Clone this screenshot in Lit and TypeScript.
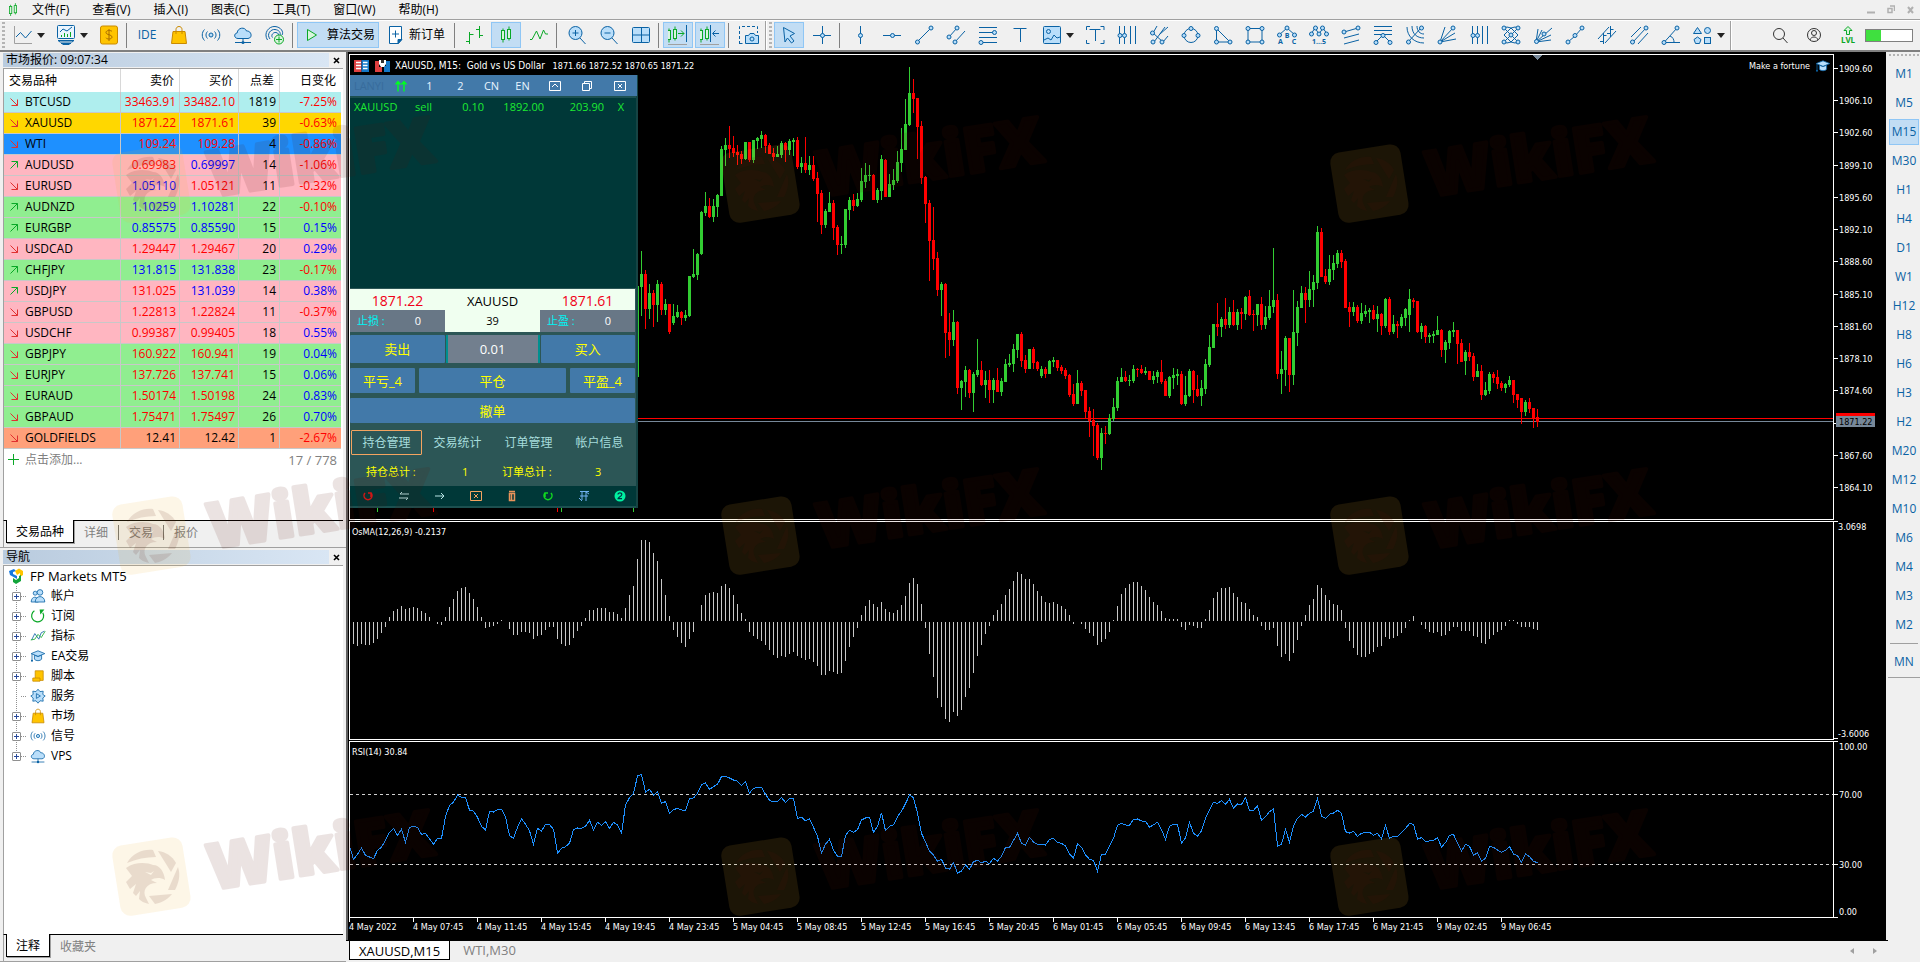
import { LitElement, html, svg, css, nothing } from "lit";
import { customElement } from "lit/decorators.js";
import { classMap } from "lit/directives/class-map.js";

/* ---------- shared look ---------- */

const base = css`
  * { box-sizing: border-box; }
  :host {
    font-family: "Open Sans", "Noto Sans", "Noto Sans CJK SC", sans-serif;
    font-size: 12px;
    line-height: 16px;
    color: #000;
  }
  button {
    appearance: none;
    margin: 0;
    padding: 0;
    border: 0;
    background: none;
    font: inherit;
    color: inherit;
    cursor: default;
    white-space: nowrap;
  }
  svg { display: block; flex: none; }
  .sheet-tabs {
    display: flex;
    align-items: flex-start;
    height: 27px;
    padding-left: 2px;
    background: #f0f0f0;
    border-top: 1px solid #000;
    color: #808080;
  }
  .sheet-tabs button { height: 22px; padding: 0 10px; line-height: 21px; }
  .sheet-tabs .on {
    margin-top: -1px;
    height: 23px;
    color: #000;
    background: #fff;
    border: 1px solid #000;
    border-top: 0;
    box-shadow: 1px 1px 0 #a0a0a0;
    padding: 0 9px;
  }
  .sheet-tabs i { width: 1px; height: 15px; margin-top: 4px; background: #707070; }
  .caption {
    display: flex;
    align-items: center;
    height: 14px;
  }
  .caption h2 {
    flex: 1;
    margin: 0;
    padding-left: 3px;
    font-size: 12px;
    font-weight: 400;
    line-height: 14px;
    background: linear-gradient(90deg, #b9cbde, #d9e6f4);
  }
  .caption button { width: 14px; display: grid; place-items: center; }
`;

/* ---------- icons ---------- */

const BLUE = "#0a62a4";
const PALE = "#b9defa";
const GREEN = "#0aa827";

const dot = (x: number, y: number, r = 2) =>
  svg`<circle cx=${x} cy=${y} r=${r} fill=${PALE} stroke=${BLUE}></circle>`;
const line = (d: string, c = BLUE) => svg`<path d=${d} fill="none" stroke=${c}></path>`;
const area = (d: string, c = BLUE, f = PALE) => svg`<path d=${d} fill=${f} stroke=${c}></path>`;
const glyphs = (x: number, y: number, s: string) =>
  svg`<text x=${x} y=${y} text-anchor="middle" font-size="7" font-weight="700" fill=${BLUE}>${s}</text>`;

const candles = (x: number) => svg`
  <path d="M${x} 3.5v14M${x + 6} 1.5v14" stroke=${GREEN}></path>
  <rect x=${x - 1.5} y="5.5" width="3" height="9" fill="#d9f5dd" stroke=${GREEN}></rect>
  <rect x=${x + 4.5} y="4.5" width="3" height="9" fill="#d9f5dd" stroke=${GREEN}></rect>`;

const cloud = svg`
  ${area("M5 13.5c-4 0-4.500-5-.8-5.600C4.500 2.500 12 1.500 13.500 6c5-.5 6.500 7 1.500 7.500z")}
  ${line("M10 13.500v3M2 17.500h16")}<circle cx="10" cy="17.500" r="1.500" fill=${BLUE}></circle>`;
const bag = svg`
  <path d="M4 6.500h12l1.500 12h-15z" fill="#ffc400" stroke="#c98a00"></path>
  <path d="M7 9V4.500c0-4 6-4 6 0V9" fill="none" stroke="#c98a00"></path>`;
const signal = svg`
  ${line("M3.500 4.500c-3 3-3 8 0 11M6.500 6.500c-2 2-2 5 0 7M16.500 4.500c3 3 3 8 0 11M13.500 6.500c2 2 2 5 0 7")}
  ${dot(10, 10)}`;
const hat = svg`
  ${area("M1.500 7L10 3.500 18.500 7 10 10.500z")}
  ${area("M5.500 9v5c2 2.500 7 2.500 9 0V9l-4.500 1.800z")}${line("M2.500 7.500v8")}
  <circle cx="2.500" cy="16" r="1.300" fill=${BLUE}></circle>`;

const icons: Record<string, unknown> = {
  logo: svg`${candles(7)}`,
  lineChart: svg`${line("M1.500 1v17.500H19", "#a0a0a0")}${line("M3 12l4.500-4.500 5 5.500L18.500 6")}`,
  indicators: svg`<rect x="1.500" y=".5" width="17" height="13" rx="1" fill="#eaf5fe" stroke=${BLUE}></rect>
    ${line("M2 15.500h16l-2 1.500H4zM5 18.500h10M6.500 19.500h7")}${line("M4 7l3-3 4 2 5-4")}
    ${line("M5.500 12v-2M8.500 12V8M11.500 12V9M14.500 12V7", GREEN)}`,
  dollar: svg`<rect x="1.500" y="1" width="17" height="18" rx="2" fill="#ffc400" stroke="#c98a00"></rect>
    <path d="M13 6.500c-1-1.500-6-1.500-6 1s6 2 6 4.500-5 2.500-6 .8M10 4v12" fill="none" stroke="#a86a00"></path>`,
  bag, signal, cloud, hat,
  antenna: svg`${line("M2.500 15C-2 8 4 1 10 1.500S19 7 17 10M5 14C1 9 6 4 10 4.500s6 3 5 6M7.500 12.500c-2-2.500 1-5.500 3.500-5s3 2 2 3.500")}
    <circle cx="14" cy="14.500" r="4.500" fill="#d9f5dd" stroke=${GREEN}></circle>${line("M14 11.500v6M11 14.500h6", GREEN)}`,
  play: svg`${area("M4.500 4.500L13.500 10l-9 5.500z", GREEN, "#d9f5dd")}`,
  order: svg`${area("M2.500 1.500h12v13l-3 4h-9z", BLUE, "#fff")}${line("M8.500 5.500v7M5 9h7")}
    ${area("M11 18.500v-4h4z", BLUE, BLUE)}`,
  bars: svg`${line("M4.500 7v12M1 16.500h3.500M4.500 9.500h4M14.500 1v12M11 4.500h3.500M14.500 10.500H18", GREEN)}`,
  candles: candles(7),
  zigzag: svg`${line("M1 14.500h2L7.500 6l3.500 8 3.500-9 2 4H19", GREEN)}`,
  zoomIn: svg`<circle cx="8.500" cy="8" r="6.500" fill=${PALE} stroke=${BLUE}></circle>${line("M13 13l5.500 6M8.500 5v6M5.500 8h6")}`,
  zoomOut: svg`<circle cx="8.500" cy="8" r="6.500" fill=${PALE} stroke=${BLUE}></circle>${line("M13 13l5.500 6M5.500 8h6")}`,
  tiles: svg`<rect x="1.500" y="2.500" width="17" height="15" rx="1" fill=${PALE} stroke=${BLUE}></rect>${line("M10.500 2.500v15M1.500 10h17")}`,
  shift: svg`<g transform="translate(-4 0)">${candles(5)}</g>${line("M10 8.500h6M13 5.500l3 3-3 3", GREEN)}${line("M18.500 0v17")}${line("M0 19.500h19", "#a0a0a0")}`,
  scroll: svg`<g transform="translate(-4 0)">${candles(5)}</g>${line("M10.500 0v17M19 8.500h-6M15.500 5.500l-3 3 3 3")}${line("M0 19.500h19", "#a0a0a0")}`,
  camera: svg`<path d="M.5 19V1.500h18V8M.5 18.500H5" fill="none" stroke=${BLUE} stroke-dasharray="3 2"></path>
    ${area("M6.500 10.500h3l1.500-2h4l1.500 2h3v8h-13z")}${dot(13, 14)}`,
  cursor: svg`${area("M4.500 2.500l11 6-4.500 2.500 4 5-2.500 2-4-5-2.500 4z")}`,
  cross: svg`${line("M10.500 1v18M1 10.500h18")}${dot(10.500, 10.500)}`,
  vline: svg`${line("M10.500 1v18")}${dot(10.500, 10.500)}`,
  hline: svg`${line("M1 10.500h18")}${dot(10.500, 10.500)}`,
  trend: svg`${line("M3 17L17 3")}${dot(3.500, 17)}${dot(17, 3)}`,
  channel: svg`${line("M3 12L11 3M9 17l10-11")}${dot(3, 12)}${dot(11, 3)}${dot(9, 17)}`,
  fibo: svg`${line("M1 2.500h18M1 7.500h15M1 12.500h18M4 17.500h15")}${dot(16.500, 7.500)}${dot(3, 17.500)}`,
  text: svg`${line("M3.500 3.500h13M10.500 3.500V17")}`,
  image: svg`<rect x="1.500" y="1.500" width="17" height="17" rx="1" fill=${PALE} stroke=${BLUE}></rect>${dot(6.500, 6.500)}${line("M2 15l4-2 3 2 3-5 3 3 3-1")}`,
  label: svg`${line("M1.500 5V1.500h3.500M15.500 1.500h3.500V5M19 15v3.500h-3.500M4.500 18.500H1.500V15M4.500 4.500h11M10.500 4.500V16")}`,
  gannLines: svg`${line("M2.500 1v18M7.500 1v18M13.500 1v18M18.500 1v18")}${dot(3, 10.500)}${dot(7.500, 10.500)}`,
  pitchfork: svg`${line("M4 8l4-7M5 17L16 2M11 9l8-7M4 8l10 9M14 17l5-6")}${dot(3.500, 8)}${dot(4, 17)}${dot(13, 17)}`,
  ellipse: svg`<circle cx="10" cy="10.500" r="7" fill="none" stroke=${BLUE}></circle>${dot(10, 3.500)}${dot(3, 10.500)}${dot(17, 10.500)}`,
  triangle: svg`${line("M3.500 3.500v13.500H17z")}${dot(3.500, 3.500)}${dot(3.500, 17)}${dot(17, 17)}`,
  rect: svg`${line("M3 3.500h14v13.500H3z")}${dot(3, 3.500)}${dot(17, 3.500)}${dot(3, 17)}${dot(17, 17)}`,
  abc: svg`${line("M2 10l8-7 8 7")}${dot(10, 3)}${dot(2.500, 10)}${dot(17.500, 10)}${glyphs(10, 13, "B")}${glyphs(3.500, 19, "A")}${glyphs(17, 19, "C")}`,
  wave5: svg`${line("M2 9l4-6 4 6 4-6 4 6")}${dot(2.500, 9)}${dot(6.500, 3)}${dot(10, 9)}${dot(13.500, 3)}${dot(17.500, 9)}${glyphs(10, 19, "1...5")}`,
  regress: svg`${line("M3 7l14-4M3 13l15-4M3 19l15-4")}${dot(3, 7)}${dot(17, 3)}`,
  arcs: svg`${line("M1 1.500h18M1 5.500h18M3 17l7-7 7 7M1 9.500h18")}${dot(3, 17.500)}${dot(10, 10.500)}${dot(17, 17.500)}`,
  fiboArc: svg`${line("M3 17L16 3M2 2c0 9 7 16 17 16M7 1c0 8 5 12 12 12M12 1c0 5 3 8 7 8")}${dot(3.500, 17)}${dot(16.500, 3)}`,
  fan: svg`${line("M3 17L8 2M3 17L16 3M3 17l15-9M3 17l16-3")}${dot(3, 17)}${dot(16, 3)}`,
  gannFan: svg`${line("M3.500 1v18M8.500 1v18M13.500 1v18M18.500 1v18")}${dot(4, 10.500)}${dot(8.500, 10.500)}`,
  grid: svg`${line("M3 3l14 14M17 3L3 17M10 3l7 7-7 7-7-7zM10 3l4-1 3 1M10 3L6 2 3 3M10 17l4 1 3-1M10 17l-4 1-3-1")}${dot(3, 3)}${dot(17, 3)}${dot(10, 10)}${dot(3, 17)}${dot(17, 17)}`,
  rays: svg`${line("M3 17L5 4M3 17L19 3M3 17l6-12M3 17l15-7M3 17l15-2")}${dot(3.500, 16.500)}${dot(11, 9)}`,
  cycle: svg`${line("M3 17l7-6 7-8")}${dot(3, 17)}${dot(10, 10.500)}${dot(17, 3)}`,
  stdDev: svg`${line("M1 14L12 2M8 18L19 6M6.500 8v11M3 16.500h3.500M6.500 10.500h3M13.500 1v11M10 8.500h3.500M13.500 4.500h3")}`,
  parallels: svg`${line("M2 12L12 2M4 17L17 3M9 19l10-11")}${dot(3.500, 17)}${dot(17, 3)}`,
  angle: svg`${line("M3 17.500L16 3M3 17.500h16M9 11c3 1 4 4 4 6")}${dot(3, 17.500)}${dot(16, 3)}`,
  shapes: svg`${area("M4.500 2.500l4 6h-8z")}<circle cx="14.500" cy="5.500" r="3" fill=${PALE} stroke=${BLUE}></circle>
    ${area("M4.500 12l3.500 2.500-1.500 4h-4l-1.500-4z")}<rect x="11.500" y="12.500" width="6" height="6" fill=${PALE} stroke=${BLUE}></rect>`,
  search: svg`<circle cx="9" cy="9" r="5.500" fill="none" stroke="#333"></circle>${line("M13 13l4.500 5", "#333")}`,
  user: svg`<g fill="none" stroke="#333"><circle cx="10" cy="10" r="6.500"></circle><circle cx="10" cy="8" r="2.500"></circle><path d="M6 15c1-4 7-4 8 0"></path></g>`,
  accounts: svg`${dot(6.500, 6.500, 2.500)}${area("M1.500 17.500c0-8 9-8 9 0z")}${dot(12.500, 5.500, 3.500)}${area("M6.500 17.500c0-9 12-9 12 0z")}`,
  refresh: svg`<path d="M5.500 3.500A7.500 7.500 0 1 0 16 6" fill="none" stroke=${GREEN} stroke-width="1.500"></path><path d="M12 2h6l-5 6z" fill=${GREEN}></path>`,
  osc: svg`${line("M2 15l4-8 5 7 3-8 4-2")}${line("M1 15l5-1 4-6 4 4 5-8", GREEN)}`,
  script: svg`<path d="M6.500 3.500h10v12h-10z" fill="#ffc400" stroke="#c98a00"></path><path d="M3.500 12.500h9v4h-9z" fill="#ffc400" stroke="#c98a00"></path>`,
  gear: svg`${area("M10 1.500l2.500 3 4-.5-.5 4 3 2-3 2.500.5 4-4-.5-2.500 3-2.500-3-4 .5.5-4L1 10l3-2-.5-4 4 .5z")}${area("M8 7l5 3-5 3z")}`,
};

const icon = (name: string, size = 20) =>
  html`<svg width=${size} height=${size} viewBox="0 0 20 20" aria-hidden="true">${icons[name]}</svg>`;
const caret = html`<svg width="8" height="5" viewBox="0 0 8 5" aria-hidden="true"><path d="M0 0h8L4 5z" fill="#222"></path></svg>`;
const cross = html`<svg width="7" height="7" viewBox="0 0 7 7" aria-hidden="true"><path d="M1 1l5 5M6 1L1 6" stroke="#000" stroke-width="1.600"></path></svg>`;

/* ---------- menu and toolbar ---------- */

type Tool = { id: string; name: string; on?: boolean; drop?: boolean };
const t = (id: string, name: string, extra: Partial<Tool> = {}): Tool => ({ id, name, ...extra });
const sep = "sep";

@customElement("tool-bar")
export class ToolBar extends LitElement {
  static styles = [base, css`
    :host { display: block; background: #f0f0f0; }
    .menu { display: flex; align-items: center; height: 19px; padding-left: 5px; }
    .menu nav { display: flex; flex: 1; gap: 23px; margin-left: 11px; }
    .menu button { line-height: 18px; }
    .win { display: flex; gap: 12px; padding-right: 6px; }
    .bar {
      display: flex;
      align-items: center;
      height: 33px;
      border-top: 1px solid #a0a0a0;
      border-bottom: 2px solid #808080;
      box-shadow: inset 0 1px 0 #fff;
      overflow: hidden;
    }
    .grip { flex: none; width: 3px; height: 26px; margin: 0 2px 0 2px; background: repeating-linear-gradient(#b4b4b4 0 2px, transparent 2px 4px); }
    .edge { flex: none; width: 2px; height: 29px; background: #a0a0a0; border-right: 1px solid #fff; }
    .sep { flex: none; width: 1px; height: 25px; margin: 0 4px 0 1px; background: #808080; }
    .tool {
      display: flex;
      flex: none;
      align-items: center;
      justify-content: center;
      width: 32px;
      height: 26px;
    }
    .drop { width: 43px; gap: 4px; }
    .on { width: 30px; margin-right: 2px; background: #c2ddf4; border: 1px solid #8fc6f5; }
    .ide { color: #0a62a4; }
    .algo { width: 82px; gap: 4px; margin: 0; padding-left: 2px; }
    .order { width: 74px; gap: 2px; }
    .end { display: flex; align-items: center; margin-left: auto; padding-right: 7px; }
    .end .tool { width: 34px; }
    .lvl { flex-direction: column; color: #0aa827; font-size: 8px; font-weight: 700; line-height: 8px; }
    .meter { width: 48px; height: 13px; border: 1px solid #808080; background: linear-gradient(90deg, #3fe03f 15px, #fff 15px); }
  `];

  private menus = ["文件(F)", "查看(V)", "插入(I)", "图表(C)", "工具(T)", "窗口(W)", "帮助(H)"];
  private left: (Tool | string)[] = [
    sep, t("bars", "柱状图"), t("candles", "蜡烛图", { on: true }), t("zigzag", "折线图"),
    sep, t("zoomIn", "放大"), t("zoomOut", "缩小"), t("tiles", "平铺"),
    sep, t("shift", "图表平移", { on: true }), t("scroll", "自动滚动", { on: true }),
    sep, t("camera", "截图"),
  ];
  private right: (Tool | string)[] = [
    t("cursor", "光标", { on: true }), t("cross", "十字线"), sep,
    t("vline", "垂直线"), t("hline", "水平线"), t("trend", "趋势线"), t("channel", "通道"), t("fibo", "斐波纳契"),
    t("text", "文本"), t("image", "图像", { drop: true }), t("label", "标签"), t("gannLines", "周期线"),
    t("pitchfork", "音叉"), t("ellipse", "椭圆"), t("triangle", "三角形"), t("rect", "矩形"), t("abc", "ABC"),
    t("wave5", "1...5"), t("regress", "回归"), t("arcs", "扩展"), t("fiboArc", "弧线"), t("fan", "扇形"),
    t("gannFan", "时区"), t("grid", "网格"), t("rays", "江恩扇"), t("cycle", "江恩线"), t("stdDev", "标准差"),
    t("parallels", "平行线"), t("angle", "角度"), t("shapes", "图形", { drop: true }),
  ];

  private tool = (x: Tool | string) =>
    typeof x === "string"
      ? html`<span class="sep"></span>`
      : html`<button class=${classMap({ tool: true, on: !!x.on, drop: !!x.drop })} aria-label=${x.name}>
          ${icon(x.id)}${x.drop ? caret : nothing}
        </button>`;

  render() {
    return html`
      <div class="menu">
        ${icon("logo", 16)}
        <nav>${this.menus.map((m) => html`<button>${m}</button>`)}</nav>
        <div class="win">
          <button aria-label="最小化"><svg width="8" height="9" viewBox="0 0 8 9"><path d="M0 7.500h8" stroke="#b0b0b0" stroke-width="2"></path></svg></button>
          <button aria-label="还原"><svg width="8" height="9" viewBox="0 0 8 9"><path d="M3 1h4.500v5M1 3.500h4v4H1z" fill="none" stroke="#b0b0b0" stroke-width="1.500"></path></svg></button>
          <button aria-label="关闭"><svg width="7" height="9" viewBox="0 0 7 9"><path d="M1 2l5 6M6 2L1 8" stroke="#b0b0b0" stroke-width="2"></path></svg></button>
        </div>
      </div>
      <div class="bar">
        <span class="grip"></span>
        ${this.tool(t("lineChart", "图表", { drop: true }))}
        ${this.tool(t("indicators", "指标", { drop: true }))}
        ${this.tool(t("dollar", "报价"))}
        <span class="sep"></span>
        <button class="tool ide">IDE</button>
        ${["bag", "signal", "cloud", "antenna"].map((n) => this.tool(t(n, n)))}
        <span class="sep"></span>
        <button class="tool on algo">${icon("play")}算法交易</button>
        <button class="tool order">${icon("order")}新订单</button>
        ${this.left.map(this.tool)}
        <span class="edge"></span>
        <span class="grip"></span>
        ${this.right.map(this.tool)}
        <span class="edge"></span>
        <div class="end">
          ${this.tool(t("search", "搜索"))}${this.tool(t("user", "帐户"))}
          <button class="tool lvl"><svg width="10" height="10" viewBox="0 0 10 10"><path d="M5 .5l4 4H6.500v4h-3v-4H1z" fill="#d9f5dd" stroke=${GREEN}></path></svg>LVL</button>
          <span class="meter"></span>
        </div>
      </div>`;
  }
}

/* ---------- market watch ---------- */

type Quote = [string, "u" | "d", string, string, string, string, string, string];
// symbol, direction, bid, ask, spread, change, row colour, price tints (bid, ask: r b k)
const quotes: Quote[] = [
  ["BTCUSD", "d", "33463.91", "33482.10", "1819", "-7.25%", "cyan", "rr"],
  ["XAUUSD", "d", "1871.22", "1871.61", "39", "-0.63%", "gold", "rr"],
  ["WTI", "d", "109.24", "109.28", "4", "-0.86%", "blue", "rr"],
  ["AUDUSD", "u", "0.69983", "0.69997", "14", "-1.06%", "pink", "rb"],
  ["EURUSD", "d", "1.05110", "1.05121", "11", "-0.32%", "pink", "br"],
  ["AUDNZD", "u", "1.10259", "1.10281", "22", "-0.10%", "green", "bb"],
  ["EURGBP", "u", "0.85575", "0.85590", "15", "0.15%", "green", "bb"],
  ["USDCAD", "d", "1.29447", "1.29467", "20", "0.29%", "pink", "rr"],
  ["CHFJPY", "u", "131.815", "131.838", "23", "-0.17%", "green", "bb"],
  ["USDJPY", "u", "131.025", "131.039", "14", "0.38%", "pink", "rb"],
  ["GBPUSD", "d", "1.22813", "1.22824", "11", "-0.37%", "pink", "rr"],
  ["USDCHF", "d", "0.99387", "0.99405", "18", "0.55%", "pink", "rr"],
  ["GBPJPY", "d", "160.922", "160.941", "19", "0.04%", "green", "rr"],
  ["EURJPY", "d", "137.726", "137.741", "15", "0.06%", "green", "rr"],
  ["EURAUD", "d", "1.50174", "1.50198", "24", "0.83%", "green", "rr"],
  ["GBPAUD", "d", "1.75471", "1.75497", "26", "0.70%", "green", "rr"],
  ["GOLDFIELDS", "d", "12.41", "12.42", "1", "-2.67%", "salmon", "kk"],
];

@customElement("market-watch")
export class MarketWatch extends LitElement {
  static styles = [base, css`
    :host { display: flex; flex-direction: column; padding: 1px 3px 0 3px; }
    .list { flex: 1; min-height: 0; overflow: hidden; margin-top: 1px; background: #fff; border: 1px solid #a0a0a0; border-width: 1px 0 0 1px; }
    .sheet-tabs { border-left: 1px solid #a0a0a0; }
    table { width: 337px; max-width: 100%; table-layout: fixed; border-collapse: separate; border-spacing: 0; }
    th { height: 23px; padding: 0 5px; font-weight: 400; text-align: right; border-right: 1px solid #d8d8d8; }
    th:first-child { text-align: left; }
    td { height: 21px; padding: 0 3px 0 0; line-height: 20px; text-align: right; border-right: 1px solid #c8c8c8; border-bottom: 1px solid #c8c8c8; }
    td:last-child { padding-right: 4px; border-right: 0; }
    th:last-child { border-right: 0; }
    td.sym { text-align: left; }
    .name { display: flex; align-items: center; gap: 7px; padding-left: 6px; }
    .r { color: #f00; } .b { color: #00f; } .k { color: #000; }
    .cyan { background: #afeeee; } .gold { background: #ffd700; } .blue { background: #1e90ff; }
    .pink { background: #ffb6c1; } .green { background: #90ee90; } .salmon { background: #ffa07a; }
    .add { display: flex; align-items: center; gap: 6px; height: 21px; padding: 0 4px; color: #808080; width: 337px; max-width: 100%; }
    .add output { margin-left: auto; font-size: 13px; }
  `];
  render() {
    const w = [117, 59, 59, 41, 61];
    return html`
      <header class="caption"><h2>市场报价: 09:07:34</h2><button aria-label="关闭">${cross}</button></header>
      <div class="list">
        <table>
          <colgroup>${w.map((x) => html`<col width=${x}>`)}</colgroup>
          <thead><tr><th>交易品种</th><th>卖价</th><th>买价</th><th>点差</th><th>日变化</th></tr></thead>
          <tbody>
            ${quotes.map(([s, dir, bid, ask, sp, ch, bg, tint]) => html`<tr class=${bg}>
              <td class="sym"><span class="name">
                <svg width="8" height="8" viewBox="0 0 8 8">${dir === "u"
                  ? line("M.5 7.500l7-7M1.500 .5h6v6", GREEN) : line("M.5 .5l7 7M1.500 7.500h6v-6", "#e03030")}</svg>${s}</span></td>
              <td class=${tint[0]}>${bid}</td><td class=${tint[1]}>${ask}</td><td>${sp}</td>
              <td class=${ch[0] === "-" ? "r" : "b"}>${ch}</td></tr>`)}
          </tbody>
        </table>
        <div class="add"><svg width="11" height="11" viewBox="0 0 11 11">${line("M5.500 0v11M0 5.500h11", GREEN)}</svg>
          <button>点击添加...</button><output>17 / 778</output></div>
      </div>
      <div class="sheet-tabs"><button class="on">交易品种</button><button>详细</button><i></i><button>交易</button><i></i><button>报价</button></div>`;
  }
}

/* ---------- navigator ---------- */

@customElement("nav-tree")
export class NavTree extends LitElement {
  static styles = [base, css`
    :host { display: flex; flex-direction: column; padding: 2px 3px 0 3px; border-top: 1px solid #a0a0a0; border-bottom: 1px solid #a0a0a0; }
    .tree { flex: 1; min-height: 0; margin-top: 1px; background: #fff; border: 1px solid #a0a0a0; border-width: 1px 0 0 1px; }
    .sheet-tabs { border-left: 1px solid #a0a0a0; }
    .root { display: flex; align-items: center; gap: 6px; height: 20px; padding-left: 4px; font-size: 13px; }
    ul { margin: 0; padding: 0; list-style: none; }
    li { display: flex; align-items: center; height: 20px; padding-left: 8px;
      background: repeating-linear-gradient(#909090 0 1px, transparent 1px 2px) 12px 0 / 1px 20px no-repeat; }
    li:last-child { background-size: 1px 10px; }
    .box { width: 9px; height: 9px; background: #fff; border: 1px solid #909090; border-radius: 1px; display: grid; place-items: center; }
    .none { border: 0; width: 5px; margin-right: 4px; background: none; }
    .stub { width: 6px; height: 1px; margin-right: 1px; background: repeating-linear-gradient(90deg, #909090 0 1px, transparent 1px 2px); }
    .label { padding-left: 3px; }
    .ico { width: 20px; display: grid; place-items: center; }
  `];
  private items: [string, string][] = [
    ["accounts", "帐户"], ["refresh", "订阅"], ["osc", "指标"], ["hat", "EA交易"], ["script", "脚本"],
    ["gear", "服务"], ["bag", "市场"], ["signal", "信号"], ["cloud", "VPS"],
  ];
  render() {
    return html`
      <header class="caption"><h2>导航</h2><button aria-label="关闭">${cross}</button></header>
      <div class="tree">
        <div class="root"><svg width="16" height="16" viewBox="0 0 16 16">
            <path d="M1 3l5-2 2 2-3 1v2l4 2v3L2 7z" fill="#1478e0"></path>
            <path d="M7 3l4-2.500L15 3v4l-3 2V5l-3 2z" fill="#ffc400"></path>
            <path d="M5 10l3 2 3-2V8l2-1v6l-5 3-3-2z" fill="#12a43a"></path></svg>FP Markets MT5</div>
        <ul>${this.items.map(([id, label]) => html`<li>
          ${id === "gear" ? html`<span class="box none"></span>` : html`<span class="box"><svg width="7" height="7" viewBox="0 0 7 7">${line("M3.500 1v5M1 3.500h5", "#2a4a9a")}</svg></span>`}
          <span class="stub"></span><span class="ico">${icon(id, 16)}</span><span class="label">${label}</span></li>`)}</ul>
      </div>
      <div class="sheet-tabs"><button class="on">注释</button><button>收藏夹</button></div>`;
  }
}

/* ---------- chart data ---------- */

// Each candle: colour, high, body top, body bottom, low, in thirds of a pixel.
const CANDLES = `g708,708,980,980 g603,672,711,798 r660,672,777,837 g702,729,777,807 r720,729,765,831 g690,702,765,816 r696,702,780,795 g747,762,780,795 r762,762,846,852 g762,798,819,825
g765,786,801,804 r783,786,804,825 g780,795,804,813 g678,678,798,801 g597,672,681,684 g609,612,675,690 g483,486,612,615 g426,468,489,498 r444,468,501,504 g447,468,501,516
g432,435,471,501 g288,297,438,438 g264,285,300,348 r228,285,297,324 r258,294,309,321 r285,306,315,345 r303,312,327,342 g276,276,327,330 r276,276,330,336 g270,270,330,339
g261,264,273,297 g243,255,267,294 r252,255,288,309 r279,285,312,312 r294,309,321,333 g288,312,321,321 g273,279,315,324 r276,279,300,336 g267,273,300,315 g264,270,276,318
r261,270,351,357 g321,339,351,369 r261,339,360,369 g318,345,360,375 r318,345,387,393 r366,384,432,516 r420,429,525,552 g477,483,525,534 g426,459,486,486 r450,459,534,570
r525,531,585,615 g558,582,585,612 g477,477,585,594 g441,450,480,510 r432,450,468,483 g429,447,468,471 g354,393,450,456 g339,375,396,414 g345,375,378,393 r372,375,450,450
g414,420,450,459 g315,327,423,450 r327,330,441,441 g372,402,441,441 g357,390,405,420 g303,336,393,399 g234,297,339,366 g147,222,300,300 g51,129,225,228 r87,129,147,189
r144,144,231,327 r213,228,384,402 r378,381,462,519 r450,459,573,693 r471,570,627,660 r606,624,720,738 g696,702,720,798 r699,702,849,924 r789,846,870,918 g780,816,870,888
r813,816,1014,1032 g990,993,1014,1080 g948,960,996,1041 r957,960,1029,1044 g966,972,1029,1086 g867,960,975,981 r933,960,1005,1008 g963,990,1005,1044 r960,990,1020,1059 g984,990,1020,1059
r954,990,1026,1026 g984,993,1026,1038 g927,942,996,996 g912,939,945,951 g882,897,942,966 g852,852,900,924 r846,852,933,951 r915,930,957,969 g897,897,957,957 r891,897,939,957
r933,936,957,963 g948,957,978,984 r951,957,972,984 g930,933,972,972 g921,930,936,951 r930,930,954,963 r945,951,963,972 r954,960,978,987 r972,975,1035,1041 r1002,1032,1062,1068
g960,999,1062,1062 r993,999,1023,1038 r1020,1020,1086,1104 r1071,1083,1113,1161 r1077,1110,1128,1218 r1119,1125,1224,1230 g1134,1149,1224,1260 r1128,1149,1152,1182 g1092,1104,1152,1155 g1044,1071,1107,1113
g981,993,1074,1083 g954,981,996,996 r963,981,993,996 g975,990,993,1008 g945,957,993,999 r954,957,960,981 r945,957,969,972 g951,963,969,975 r963,963,990,990 g963,978,990,1002
g960,966,981,999 r930,966,996,1002 r987,993,1038,1038 g978,981,1038,1044 g954,975,984,1017 g957,972,978,1005 r963,972,1062,1065 g978,1035,1062,1068 g957,963,1038,1041 r960,963,1020,1059
r975,1017,1038,1041 g990,1014,1038,1068 g927,942,1017,1032 g855,891,945,951 g822,822,894,894 r759,822,831,858 g801,807,831,861 r744,807,825,837 g771,786,825,834 r750,786,825,828
g777,786,825,840 r774,786,792,837 g738,741,792,810 r720,738,795,798 r780,792,795,843 g762,762,795,828 r741,762,825,840 g768,801,825,837 g720,768,804,810 g594,750,771,789
r732,750,972,987 g903,957,972,1032 g858,864,960,1008 r864,864,975,1026 g720,846,975,1005 g753,771,849,888 g708,729,774,774 r711,729,750,819 g663,717,750,771 g675,696,720,771
g528,546,699,717 r534,546,681,681 r657,678,696,702 g615,657,696,705 g615,639,660,690 g600,609,642,654 r600,609,636,654 r627,633,774,774 r756,771,786,831 g756,771,786,798
r765,771,813,819 g759,789,813,822 g765,783,792,801 g774,780,786,819 r765,780,807,810 g768,792,807,846 r789,792,828,855 g744,747,828,834 r741,747,846,855 g795,822,846,852
r813,822,828,864 g792,801,828,834 g774,777,804,828 g717,747,795,846 r744,750,756,774 r753,753,846,849 g819,828,846,867 r825,828,861,879 g849,855,861,879 g843,852,858,879
g798,840,855,855 r837,840,900,921 g870,876,900,939 g840,843,879,897 g816,840,846,861 r840,840,882,942 r867,879,936,936 g900,906,933,975 r879,906,921,933 r909,918,981,993
g942,963,981,981 r945,963,1035,1050 g996,1020,1035,1038 g966,972,1023,1032 r966,972,984,999 r960,981,1002,1017 r993,999,1014,1023 g999,1002,1014,1029 g978,990,1005,1011 r990,990,1035,1059
r1032,1032,1050,1074 r1044,1044,1086,1122 g1050,1056,1086,1098 r1044,1056,1077,1089 r1074,1074,1104,1134 r1077,1101,1116,1131`
  .split(/\s+/)
  .map((c) => ({ up: c[0] === "g", v: c.slice(1).split(",").map(Number) }));

// Histogram ends, one bar every four pixels, in thirds of a pixel; 320 is zero.
const OSMA = `384 390 384 387 387 381 369 351 333 306 288 282 273 282 279 276 279 288 294 306 320 324 327 306 276 252 228 219 216 234 252 276 306 336 333 330 324 315 320
339 357 357 348 348 351 369 360 357 342 333 333 369 384 390 387 366 345 330 309 285 285 279 279 279 291 291 297 309 279 240 213 132 75 75 81 114 138 192 240 303
342 363 381 393 369 348 320 270 240 234 231 234 213 207 219 240 267 294 312 348 360 369 375 387 402 417 426 420 423 414 408 420 426 432 429 438 450 477 477 465 468 474 471 435 393 363 336
300 273 255 267 276 261 282 291 294 285 270 243 204 189 207 267 336 414 483 546 573 609 618 588 600 582
543 516 471 420 387 354 330 300 285 267 240 222 198 171 177 192 192 207 228 243 261 264 261 267 273 282 300 324 320 324 339 351 360 387 378 369 348 315 273 237 219 207 201 201 213 225 246 261 270 288
309 312 312 312 333 342 327 330 336 336 312 285 249 231 219 219 216 234 246 261 264 282 300 306 330 342 342 336 390 423 414 435 411 372 330 300 270 252 210 219 240 255 267 270 285 336 375 396 417 423 423
414 408 393 390 363 369 366 360 351 336 315 303 320 327 339 348 351 348 360 357 345 333 333 345 345 345 360 363 381 384 369 357 348 342 330 315 315 324 333 333 333 339 342`
  .split(/\s+/)
  .map(Number);

// Oscillator samples, one every four pixels, in thirds of a pixel.
const RSI = `993 1033 1018 999 1021 1026 1031 1006 997 975 952 940 961 943 982 937 934 937 958 955 972 988 970 970 905 871 862 840 847 848 885 889 907 934 945 889 891 884 883 905 962 970 937 911 928 947 988 940 948 928 929 943 1015 1000 995 985 944 939 940 934 916 945 922 931 920 940 922 930 955 870 848 835 783 778 831 823 840 830 864 860 894 884 880 885 886 851 849 835 809 804 823 815 808 785 784 789 795 799 811 800 834 820 817 817 838 856 861 860 848 862 850 850 910 907 917 912 937 964 1014 988 973 1005 1024 1024 962 946 952 944 915 909 907 952 934 893 947 934 929 905 889 866 840 848 895 955 981 1008 1020 1039 1033 1059 1063 1043 1074 1068
1050 1063 1040 1036 1043 1039 1046 1030 1038 1024 997 997 976 955 985 991 967 981 988 988 990 973 970 982 985 993 1017 1029 986 997 1020 1033 1036 1069 1018 1018 993 970 931 925 930 931 913 912 918 919 937 929 922 944 973 934 928 928 985 968 922 955 964 947 910 885 862 865 857 868 853 880 867 868 848 886 886 872 916 905 890 881 993 988 943 982 934 910 898 906 895 888 850 903 910 898 894 886 895 950 954 949 964 955 952 952 961 955 972 931 970 964 964 952 940 926 928 972 968 979 978 976 968 996 983 961 958 985 1008 988 994 1020 1014 1039 1030 995 997 1005 1012 1006 995 1017 1022 1042 1016 1025 1039 1043`
  .split(/\s+/)
  .map(Number);

const TIMES = ["4 May 2022", "4 May 07:45", "4 May 11:45", "4 May 15:45", "4 May 19:45", "4 May 23:45", "5 May 04:45", "5 May 08:45", "5 May 12:45", "5 May 16:45", "5 May 20:45", "6 May 01:45", "6 May 05:45", "6 May 09:45", "6 May 13:45", "6 May 17:45", "6 May 21:45", "9 May 02:45", "9 May 06:45"];
const PRICES = ["1909.60", "1906.10", "1902.60", "1899.10", "1895.60", "1892.10", "1888.60", "1885.10", "1881.60", "1878.10", "1874.60", "1871.10", "1867.60", "1864.10"];

/* ---------- trade panel ---------- */

@customElement("trade-panel")
export class TradePanel extends LitElement {
  static styles = [base, css`
    :host { display: block; width: 288px; background: #2c5656; border-right: 2px solid #164444; font-size: 11px; }
    .head { display: grid; grid-template-columns: 38px 26px 31px 31px 31px 31px 33px 31px 1fr; align-items: center; justify-items: center; height: 21px; background: #4279a9; color: #e8f4ff; margin-right: -1px; }
    .dim { color: #386c9c; }
    .orders { height: 192px; padding-top: 1px; background: #003838; border-top: 2px solid #1c5050; color: #1eea32; }
    .order { display: grid; grid-template-columns: 61px 22px 47px 60px 60px 1fr; align-items: center; padding-left: 4px; }
    .order > * { text-align: right; }
    .order > :first-child, .order > :nth-child(2) { text-align: left; }
    .order button { padding-right: 12px; }
    .quote { display: grid; grid-template-columns: 1fr 95px 1fr; margin: 1px 1px 0 0; background: #f0fff0; text-align: center; }
    .px { height: 21px; line-height: 24px; font-size: 13px; }
    .red { color: #f00018; font-size: 14px; }
    .lvl { display: flex; align-items: center; height: 22px; padding-left: 7px; background: #687786; color: #00f4f4; }
    .lvl input { flex: 1; width: 60px; padding-left: 6px; text-align: center; }
    .mid { line-height: 22px; }
    input { min-width: 0; border: 0; padding: 0; background: none; font: inherit; color: #fff; text-align: center; }
    .rows { display: flex; flex-direction: column; gap: 5px; padding: 3px 1px 0 0; }
    .row { display: flex; gap: 4px; height: 25px; }
    .row button { background: #4279a9; color: #ff0; font-size: 13px; border-radius: 1px; }
    .deal { gap: 1px; height: 28px; }
    .deal button { flex: 1; }
    .vol { width: 94px; background: #727f8e; border: solid #008f8f; border-width: 0 2px; font-size: 13px; }
    .side { width: 65px; }
    .wide { flex: 1; }
    .pages { display: grid; grid-template-columns: repeat(4, 71px); height: 25px; margin: 7px 0 0 1px; color: #a5dcdc; font-size: 12px; }
    .pages .on { border: 1px solid #f4a460; border-radius: 1px; }
    .sums { display: grid; grid-template-columns: 90px 46px 87px 1fr; align-items: center; height: 31px; padding: 3px 0 0 16px; color: #ff0; }
    .sums b { font-weight: 400; padding-left: 6px; }
    .foot { display: grid; grid-template-columns: repeat(8, 36px); justify-items: center; align-items: center; height: 22px; background: #003838; border-bottom: 2px solid #1c5050; }
  `];
  private foot = [
    svg`<path d="M3 3a4 4 0 1 0 6 0M9 7V3h-3" fill="none" stroke="#e01818" stroke-width="1.500"></path>`,
    svg`<path d="M11 4H2l2-2M1 8h9l-2 2" fill="none" stroke="#b8e4e4"></path>`,
    svg`<path d="M1 6h9M7 3l3 3-3 3" fill="none" stroke="#b8e4e4"></path>`,
    svg`<path d="M.5 1.500h11v9H.5zM4 4l4 4M8 4L4 8" fill="none" stroke="#f4a460"></path>`,
    svg`<path d="M3 1.500h6M3.500 3.500h5v7h-5zM5.500 4v6" fill="none" stroke="#e8935a" stroke-width="1.500"></path>`,
    svg`<path d="M3 3a4 4 0 1 0 6 0M9 7V3h-3" transform="translate(12) scale(-1 1)" fill="none" stroke="#10d820" stroke-width="1.500"></path>`,
    svg`<path d="M4 1v9M1 8l3 3M8 11V2l3 2M2 1.500h9M2 6h8" fill="none" stroke="#70b0f0"></path>`,
    svg`<circle cx="6" cy="6" r="5.500" fill="#00f0a0"></circle><path d="M4 4.500c0-2.500 4-2 3.800 0S4 7.500 4 8.700h4" fill="none" stroke="#034" stroke-width="1.200"></path>`,
  ];
  render() {
    const glyph = (g: unknown) => html`<svg width="12" height="12" viewBox="0 0 12 12">${g}</svg>`;
    return html`
      <div class="head">
        <span class="dim">LANYI</span>${glyph(svg`<path d="M3 11.500V2M.5 4.500L3 1.500l2.500 3M9 11.500V2M6.500 4.500L9 1.500l2.500 3" fill="none" stroke="#00ff20" stroke-width="1.400"></path>`)}
        <button>1</button><button>2</button><button>CN</button><button>EN</button>
        <button aria-label="收起">${glyph(svg`<path d="M.5 1.500h11v9H.5zM3 7l3-3 3 3" fill="none" stroke="#fff"></path>`)}</button>
        <button aria-label="窗口">${glyph(svg`<path d="M1.500 3.500h7v7h-7zM3.500 3V1.500h7v7H9" fill="none" stroke="#fff"></path>`)}</button>
        <button aria-label="关闭">${glyph(svg`<path d="M.5 1.500h11v9H.5zM4 4l4 4M8 4L4 8" fill="none" stroke="#fff"></path>`)}</button>
      </div>
      <div class="orders"><div class="order"><span>XAUUSD</span><span>sell</span><span>0.10</span><span>1892.00</span><span>203.90</span><button>X</button></div></div>
      <div class="quote">
        <span class="px red">1871.22</span><span class="px">XAUUSD</span><span class="px red">1871.61</span>
        <label class="lvl">止损 :<input value="0"></label><span class="mid">39</span><label class="lvl">止盈 :<input value="0"></label>
      </div>
      <div class="rows">
        <div class="row deal"><button>卖出</button><input class="vol" value="0.01" aria-label="手数"><button>买入</button></div>
        <div class="row"><button class="side">平亏_4</button><button class="wide">平仓</button><button class="side">平盈_4</button></div>
        <div class="row"><button class="wide">撤单</button></div>
      </div>
      <div class="pages"><button class="on">持仓管理</button><button>交易统计</button><button>订单管理</button><button>帐户信息</button></div>
      <div class="sums"><span>持仓总计 :</span><b>1</b><span>订单总计 :</span><b>3</b></div>
      <div class="foot">${this.foot.map((g) => html`<button>${glyph(g)}</button>`)}</div>`;
  }
}

/* ---------- chart window ---------- */

@customElement("chart-window")
export class ChartWindow extends LitElement {
  static styles = [base, css`
    :host { display: flex; flex-direction: column; min-width: 0; background: #000; border-left: 2px solid #606060; }
    .chart { flex: 1; min-height: 0; display: grid; grid-template-columns: minmax(0, 1fr) 52px; grid-template-rows: 466fr 219fr 177fr 21px; row-gap: 1px; padding: 2px 0 0 1px;
      font-family: "DejaVu Sans Condensed", "DejaVu Sans", sans-serif; font-size: 9px; color: #fff; border-right: 2px solid #f0f0f0; }
    .pane { position: relative; border: 1px solid #fff; min-height: 0; }
    .pane > svg, .axis { width: 100%; height: 100%; }
    .pane > svg { position: absolute; inset: 0; overflow: hidden; }
    .axis { overflow: visible; min-height: 0; }
    text { fill: #fff; font-family: "DejaVu Sans Condensed", "DejaVu Sans", sans-serif; font-size: 9px; }
    .dark { fill: #000; }
    .crisp { shape-rendering: crispEdges; }
    .title { position: relative; display: flex; align-items: center; gap: 5px; height: 12px; margin: 5px 2px 0 4px; line-height: 12px; white-space: pre; }
    .title .sym { font-size: 10px; }
    .title .own { margin-left: auto; }
    .name { padding: 5px 0 0 2px; line-height: 10px; position: relative; }
    trade-panel { position: absolute; left: 0; top: 20px; }
    .times { grid-column: 1 / -1; width: 100%; height: 21px; margin-top: -1px; overflow: visible; }
    .tabs { display: flex; align-items: flex-start; height: 22px; margin-left: -2px; padding-left: 3px; background: #f0f0f0; box-shadow: inset 0 1px 0 #000; color: #808080; font-size: 13px; }
    .tabs button { height: 20px; padding: 0 13px; line-height: 20px; }
    .tabs .on { height: 20px; padding: 0 9px; color: #000; background: #fff; border: 1px solid #000; }
    .tabs svg { margin: 8px 11px 0 0; }
    .arrows { display: flex; margin-left: auto; gap: 8px; }
  `];

  private price() {
    const y = (v: number) => Math.round(v / 3) - 5;
    return svg`<svg class="crisp">
      ${[[27, 1], [83, 0], [207, 0], [211, 1], [283, 1]].map(([x, up]) => svg`<rect x=${x} y="453" width="1" height="4" fill=${up ? "#32cd32" : "#f00"}></rect>`)}
      <rect x="0" y="363" width="100%" height="1" fill="#f00"></rect>
      <rect x="0" y="366" width="100%" height="1" fill="#778899"></rect>
      ${CANDLES.map(({ up, v }, i) => {
        const x = 287 + i * 4, [h, a, b, l] = v.map(y);
        return svg`<path d="M${x} ${h}h1V${l}h-1zM${x - 1} ${a}h3V${Math.max(b, a + 1)}h-3z" fill=${up ? "#32cd32" : "#f00"}></path>`;
      })}
      <path d="M1182 0h11l-5.500 5z" fill="#778899"></path>
    </svg>`;
  }

  render() {
    const osY = (v: number) => Math.round((v - 318) / 3);
    return html`
      <div class="chart">
        <div class="pane">
          ${this.price()}
          <div class="title">
            <svg width="15" height="12" viewBox="0 0 15 12"><path d="M0 0h7.500v12H0z" fill="#e04040"></path><path d="M7.500 0H15v12H7.500z" fill="#1478c8"></path><path d="M2 2.500h5M2 5.500h5M2 8.500h5M9 2.500h4.500M9 5.500h4.500M9 8.500h4.500" stroke="#fff" stroke-width="1.500"></path></svg>
            <svg width="16" height="12" viewBox="0 0 16 12"><path d="M1 1h4v6h3v5H1z" fill="#e04040"></path><path d="M16 1v11h-6V6h2V1z" fill="#1478c8"></path><path d="M5 0h7v4l-2 3H7L5 4z" fill="#fff"></path><path d="M7 0h3v3H7z" fill="#333"></path></svg>
            <span class="sym">XAUUSD, M15:  Gold vs US Dollar</span><span> 1871.66 1872.52 1870.65 1871.22</span>
            <span class="own">Make a fortune</span>${icon("hat", 16)}
          </div>
          <trade-panel></trade-panel>
        </div>
        <svg class="axis">
          ${PRICES.map((p, i) => {
            const y = Math.round(14 + i * 32.230);
            return svg`<path class="crisp" d="M0 ${y}.500h4" stroke="#fff"></path>${i === 11 ? nothing : svg`<text x="5" y=${y + 4}>${p}</text>`}`;
          })}
          <rect x="2" y="359" width="39" height="3" fill="#f00"></rect><rect x="2" y="362" width="39" height="11" fill="#778899"></rect>
          <text class="dark" x="5" y="371">1871.22</text>
        </svg>
        <div class="pane">
          <svg class="crisp">
            <g transform="translate(0 99)">${OSMA.map((v, i) => {
              const h = osY(v);
              return svg`<rect x=${3 + i * 4} y=${h > 0 ? 1 : h} width="1" height=${Math.abs(v === 320 ? 0 : h)} fill="#c8c8c8"></rect>`;
            })}</g>
          </svg>
          <div class="name">OsMA(12,26,9) -0.2137</div>
        </div>
        <svg class="axis">
          <path class="crisp" d="M0 .5h4M0 217.500h4" stroke="#fff"></path>
          <text x="4" y="9">3.0698</text><text x="4" y="216">-3.6006</text>
        </svg>
        <div class="pane">
          <svg>
            <path class="crisp" d="M0 52.500h3000M0 122.500h3000" stroke="#d0d0d0" stroke-dasharray="3 3"></path>
            <polyline class="crisp" fill="none" stroke="#1e90ff" points=${RSI.map((v, i) => `${-1 + i * 4 + 0.5},${(v / 3 - 227).toFixed(1)}`).join(" ")}></polyline>
          </svg>
          <div class="name">RSI(14) 30.84</div>
        </div>
        <svg class="axis">
          <path class="crisp" d="M0 .5h4M0 53.500h4M0 123.500h4M0 176.500h4" stroke="#fff"></path>
          <text x="5" y="9">100.00</text><text x="5" y="57">70.00</text><text x="5" y="127">30.00</text><text x="5" y="174">0.00</text>
        </svg>
        <svg class="times">${TIMES.map((s, i) => svg`<path class="crisp" d="M${i * 64}.500 0v4" stroke="#fff"></path><text x=${i * 64} y="12">${s}</text>`)}</svg>
      </div>
      <div class="tabs"><button class="on">XAUUSD,M15</button><button>WTI,M30</button>
        <span class="arrows"><svg width="4" height="6" viewBox="0 0 4 6"><path d="M4 0v6L0 3z" fill="#a0a0a0"></path></svg><svg width="4" height="6" viewBox="0 0 4 6"><path d="M0 0v6l4-3z" fill="#a0a0a0"></path></svg></span>
      </div>`;
  }
}

/* ---------- application ---------- */

@customElement("app-root")
export class AppRoot extends LitElement {
  static styles = [base, css`
    :host { position: relative; display: flex; flex-direction: column; height: 100vh; overflow: hidden; background: #f0f0f0; }
    main { flex: 1; min-height: 0; display: grid; grid-template-columns: 346px minmax(0, 1fr) 32px; }
    .dock { display: grid; grid-template-rows: 495fr 415fr; min-height: 0; }
    .dock > * { min-height: 0; }
    .frames { display: flex; flex-direction: column; align-items: center; gap: 3px; padding-top: 2px; color: #0a62a4; }
    .frames::before { content: ""; width: 30px; height: 2px; margin-bottom: 2px; background: repeating-linear-gradient(90deg, #b4b4b4 0 2px, transparent 2px 4px); }
    .frames button { width: 30px; height: 26px; text-align: center; }
    .frames .on { background: #c2ddf4; border: 1px solid #8fc6f5; }
    .frames hr { width: 28px; height: 1px; margin: 2px 0; border: 0; background: #a0a0a0; }
    .frames .end { width: 32px; margin: -1px 0 0; }
    .marks { position: absolute; inset: 0; width: 100%; height: 100%; pointer-events: none; }
    .marks text { font: 800 63px "Open Sans", "Noto Sans", sans-serif; stroke: #581208; stroke-width: 4px; stroke-linejoin: round; }
  `];
  private frames = ["M1", "M5", "M15", "M30", "H1", "H4", "D1", "W1", "H12", "H8", "H6", "H3", "H2", "M20", "M12", "M10", "M6", "M4", "M3", "M2"];

  private mark(x: number, y: number) {
    return svg`<g transform="translate(${x} ${y})">
      <rect x="-36" y="-36" width="71" height="71" rx="10" transform="rotate(-9)" fill="#edaf32" opacity=".118"></rect>
      <g opacity=".114" fill="#581208">
        <path d="M-25-14C-19-24-9-28 1-27l3 7C-6-20-16-18-25-14z"></path>
        <path d="M6-26c8 1 14 5 18 12l-5 9z"></path>
        <path d="M26-10c3 9 0 17-3 23h-7z"></path>
        <path d="M20 17C14 24 8 26 3 27l-6-8z"></path>
        <path fill-rule="evenodd" d="M-26-9C-16-16-4-14 1-12 8-12 12-5 13 3 8 0 2 1-1 3l6 3C-6 6-10 14-6 21l3 6c-5-1-8-3-10-5l1-8-4 5-3-3 3-9-6 5-4-7 6-6zM-7-5l6 1 3-2-3 4z"></path>
        <text x="57" y="22" transform="rotate(-9)">WikiFX</text>
      </g>
    </g>`;
  }

  render() {
    return html`
      <tool-bar></tool-bar>
      <main>
        <div class="dock"><market-watch></market-watch><nav-tree></nav-tree></div>
        <chart-window></chart-window>
        <nav class="frames" aria-label="周期">
          ${this.frames.map((f) => html`<button class=${f === "M15" ? "on" : ""}>${f}</button>`)}
          <hr><button>MN</button><hr class="end">
        </nav>
      </main>
      <svg class="marks" aria-hidden="true">
        ${[184, 536, 877].map((y) => [152, 761, 1370].map((x) => this.mark(x, y)))}
      </svg>`;
  }
}
